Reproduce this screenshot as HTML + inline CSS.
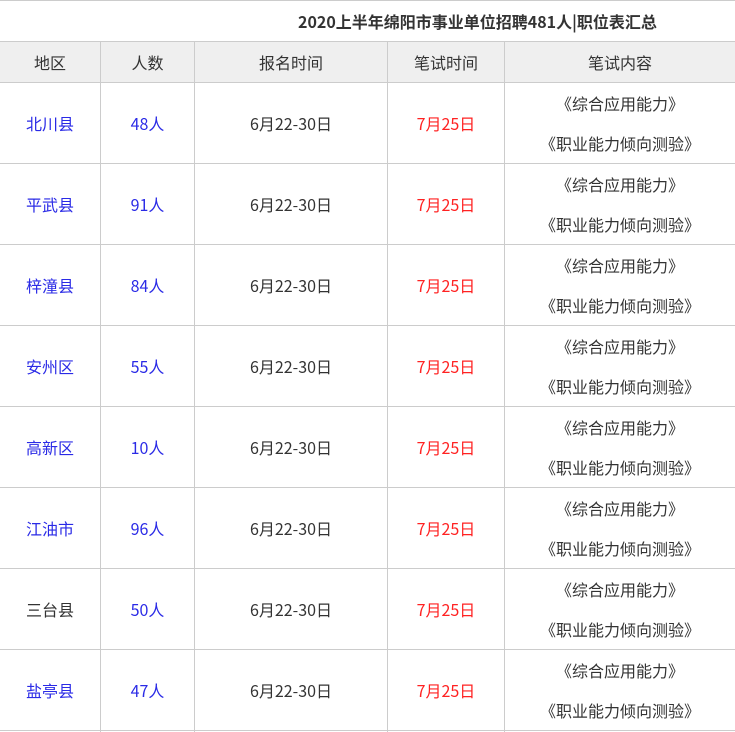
<!DOCTYPE html>
<html><head><meta charset="utf-8"><style>
body{margin:0;background:#fff;width:735px;height:732px;overflow:hidden;font-family:"Noto Sans CJK SC","Liberation Sans",sans-serif;font-size:16px;color:#333}
.c{position:absolute;display:flex;align-items:center;justify-content:center;text-align:center;box-sizing:border-box}
.h{position:absolute;left:0;width:735px;height:1px;background:#ccc}
.v{position:absolute;width:1px;top:41px;height:691px;background:#ccc}
.b{color:#2a2ae6}.r{color:#f22}
</style></head><body>
<div class="h" style="top:0"></div>
<div class="c" style="left:298px;top:0;height:41px;font-weight:bold;font-size:16px;white-space:nowrap">2020上半年绵阳市事业单位招聘481人|职位表汇总</div>
<div style="position:absolute;left:0;top:41px;width:735px;height:41px;background:#efefef"></div>
<div class="h" style="top:41px"></div><div class="h" style="top:82px"></div>
<div class="v" style="left:100px"></div><div class="v" style="left:194px"></div><div class="v" style="left:387px"></div><div class="v" style="left:504px"></div>
<div class="c" style="left:0;width:100px;top:42px;height:40px">地区</div>
<div class="c" style="left:101px;width:93px;top:42px;height:40px">人数</div>
<div class="c" style="left:195px;width:192px;top:42px;height:40px">报名时间</div>
<div class="c" style="left:388px;width:116px;top:42px;height:40px">笔试时间</div>
<div class="c" style="left:505px;width:230px;top:42px;height:40px">笔试内容</div>
<div id="rows"></div>
<script>
var d=[["北川县","48人",1],["平武县","91人",1],["梓潼县","84人",1],["安州区","55人",1],["高新区","10人",1],["江油市","96人",1],["三台县","50人",0],["盐亭县","47人",1]];
var h="";
d.forEach(function(r,i){var t=83+i*81;
h+='<div class="h" style="top:'+(t+80)+'px"></div>';
h+='<div class="c '+(r[2]?'b':'')+'" style="left:0;width:100px;top:'+t+'px;height:80px">'+r[0]+'</div>';
h+='<div class="c b" style="left:101px;width:93px;top:'+t+'px;height:80px">'+r[1]+'</div>';
h+='<div class="c" style="left:195px;width:192px;top:'+t+'px;height:80px">6月22-30日</div>';
h+='<div class="c r" style="left:388px;width:116px;top:'+t+'px;height:80px">7月25日</div>';
h+='<div class="c" style="left:505px;width:230px;top:'+t+'px;height:80px;flex-direction:column;line-height:40px"><div>《综合应用能力》</div><div>《职业能力倾向测验》</div></div>';});
document.getElementById("rows").innerHTML=h;
</script>
</body></html>
